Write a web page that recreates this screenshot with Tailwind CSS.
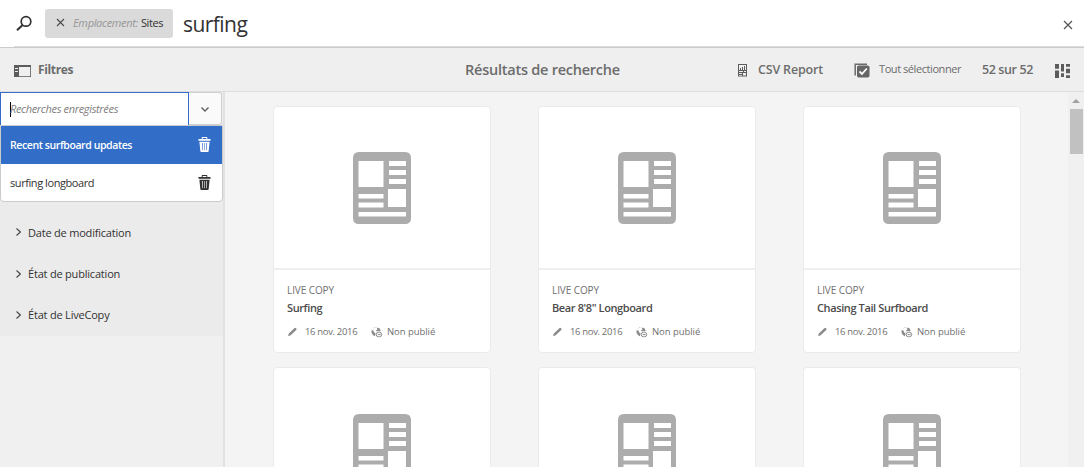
<!DOCTYPE html>
<html lang="fr">
<head>
<meta charset="utf-8">
<title>Résultats de recherche</title>
<script src="https://cdn.jsdelivr.net/npm/@tailwindcss/browser@4"></script>
</head>
<body class="w-[1084px] h-[467px] overflow-hidden flex flex-col bg-[#f4f4f4] font-['Open_Sans','Noto_Sans',sans-serif] text-[#6c6c6c] whitespace-nowrap">

<svg class="hidden">
  <symbol id="page" viewBox="0 0 60 74">
    <path fill="#acacac" fill-rule="evenodd" d="M7 1H53Q59 1 59 7V67Q59 73 53 73H7Q1 73 1 67V7Q1 1 7 1ZM6.500 10V36H31.500V10ZM37 10V15H54V10ZM37 19V24H54V19ZM37 28V33H54V28ZM36 38V56H54V38ZM6.500 43V47.500H31.500V43ZM6.500 51.500V56.500H31.500V51.500ZM6.500 61V65.500H54V61Z"/>
  </symbol>
  <symbol id="trash" viewBox="0 0 14 17">
    <path fill="currentColor" fill-rule="evenodd" d="M4 2V.500Q4 0 4.500 0H9.500Q10 0 10 .500V2H13.500V4H.500V2ZM5 1V2H9V1ZM1.500 5H12.500L11.500 15Q11.400 16 10.500 16H3.500Q2.600 16 2.500 15ZM4.200 6.500L4.700 14H5.300L5 6.500ZM6.700 6.500V14H7.300V6.500ZM9 6.500L8.700 14H9.300L9.800 6.500Z"/>
  </symbol>
  <symbol id="pencil" viewBox="0 0 11 11">
    <path fill="#8a8a8a" d="M7.300 1.200L8.500 .700 9.700 2 9.200 3.100 3.700 8.300 1 9.300 1.900 6.500Z"/>
  </symbol>
  <symbol id="globe" viewBox="0 0 12 11">
    <path fill="#8a8a8a" d="M4.500 .400Q2 .700 .700 3L2.500 3.500 3 5.500 4.500 6 4 9 3.500 9.300Q0 7 .500 4 1.500 .300 5 .200ZM5.500 .500L8.500 1.200 9.700 3.800 8.500 4.500 7 3.800 6 4.800 5 3.500 6.500 2.200Z"/>
    <rect x="5.200" y="5.400" width="5.500" height="4.300" rx="2.100" fill="none" stroke="#8a8a8a"/>
    <path stroke="#8a8a8a" d="M6.700 7.600H9.500"/>
  </symbol>
</svg>

<header class="h-[48px] shrink-0 bg-white flex flex-col">
  <div class="h-[46px] flex items-center pl-[16px] pr-[11px]">
    <svg class="size-[17px]" viewBox="0 0 17 17" fill="none" stroke="#323232" stroke-width="1.700"><circle cx="10" cy="6.400" r="4.800"/><path d="M6.700 9.900L1 15.300" stroke-width="2"/></svg>
    <div class="ml-[12px] w-[128px] h-[29px] rounded-[3px] bg-[#dadada] flex items-center pl-[11px] text-[11px]">
      <svg class="size-[9px] -mt-px" viewBox="0 0 9 9" stroke="#4b4b4b" stroke-width="1.100"><path d="M1 1L8 8M8 1L1 8"/></svg>
      <i class="ml-[8px] w-[68px] text-[#969696] tracking-[-0.320px]">Emplacement:</i>
      <span class="text-[#323232] tracking-[-0.440px]">Sites</span>
    </div>
    <span class="ml-[10px] text-[21px] leading-[28px] tracking-[-0.550px] text-[#323232] mt-[2px]">surfing</span>
    <svg class="ml-auto size-[10px] mt-[4px]" viewBox="0 0 10 10" stroke="#555" stroke-width="1.200"><path d="M1 1L9 9M9 1L1 9"/></svg>
  </div>
  <div class="ml-[14px] h-px bg-[#dcdcdc]"></div>
  <div class="h-px bg-[#cbcbcb]"></div>
</header>

<div class="h-[44px] shrink-0 bg-[#efefef] border-b border-[#dddddd] flex items-center pl-[14px] font-semibold">
  <svg class="w-[17px] h-[12px] mt-[2px]" viewBox="0 0 17 12"><path fill="#5c5c5c" fill-rule="evenodd" d="M0 0H17V12H0ZM5 2V11.300H16.200V2ZM1 3V4H4V3ZM1 6V7H4V6Z"/></svg>
  <span class="ml-[7px] w-[427px] text-[12px] font-bold tracking-[-0.370px]">Filtres</span>
  <span class="w-[272px] text-[14.500px] tracking-[-0.240px]">Résultats de recherche</span>
  <svg class="w-[11px] h-[13px] mt-[2px]" viewBox="0 0 11 13"><path fill="#5c5c5c" fill-rule="evenodd" d="M1 0H10V12.500H1ZM2 1V6H3V4H4V6H5V3H6V6H7V2H8V6H9V1ZM2 7V8H6V7ZM7 7V8H9V7ZM2 9V10H5V9ZM6 9V11.500H9V9ZM2 11V11.700H5V11Z"/></svg>
  <span class="ml-[10px] mt-[2px] w-[96px] text-[12.500px] tracking-[-0.180px]">CSV Report</span>
  <svg class="w-[16px] h-[15px] mt-px" viewBox="0 0 16 15"><path d="M1.200 12.500V1.200H13" fill="none" stroke="#6c6c6c" stroke-width="1.500"/><rect x="3" y="2.500" width="12.500" height="12" rx="1.800" fill="#666"/><path d="M5.500 8.500L8 11L12.800 5.500" fill="none" stroke="#fff" stroke-width="1.800"/></svg>
  <span class="ml-[9px] w-[103px] text-[11px] font-normal tracking-[-0.430px]">Tout sélectionner</span>
  <span class="w-[73px] mt-[2px] text-[12.500px] tracking-[-0.390px]">52 sur 52</span>
  <svg class="w-[15px] h-[14px] mt-[2px]" viewBox="0 0 15 15" preserveAspectRatio="none" fill="#5c5c5c"><path d="M0 0H4V5H0ZM0 7H4V15H0ZM6 0H9V8H6ZM6 10H9V14H6ZM11 0H15V3H11ZM11 5H15V10H11ZM11 12H15V15H11Z"/></svg>
</div>

<div class="flex flex-1 min-h-0">
  <aside class="w-[225px] shrink-0 border-r-2 border-[#e2e2e2] bg-[#f0f0f0] text-[11px] text-[#323232]">
    <div class="h-[244px] bg-[#ebebeb]">
      <div class="flex h-[33px]">
        <div class="w-[189px] bg-white border border-b-0 border-[#326ec8] flex items-center pl-[9px]">
          <span class="w-px h-[15px] bg-black"></span>
          <i class="-ml-px text-[#808080] tracking-[-0.340px]">Recherches enregistrées</i>
        </div>
        <div class="w-[33px] bg-[#fafafa] border border-l-0 border-[#d0d0d0] rounded-r-[3px] flex items-center justify-center">
          <svg class="w-[8px] h-[5px] mt-px" viewBox="0 0 8 5" fill="none" stroke="#606060" stroke-width="1.400"><path d="M.500 .500L4 4L7.500 .500"/></svg>
        </div>
      </div>
      <div class="w-[223px] h-[77px] bg-white border border-[#cbcbcb] rounded-b-[4px]">
        <div class="h-[38px] bg-[#326ec8] text-white flex items-center justify-between pl-[9px] pr-[11px]">
          <span class="mt-[2px] text-[10.500px] font-semibold tracking-[-0.400px]">Recent surfboard updates</span>
          <svg class="w-[13px] h-[16px] -mt-px" viewBox="0 0 14 17" preserveAspectRatio="none"><use href="#trash" width="14" height="17"/></svg>
        </div>
        <div class="h-[37px] flex items-center justify-between pl-[9px] pr-[11px]">
          <span class="mt-[2px] tracking-[-0.430px]">surfing longboard</span>
          <svg class="w-[13px] h-[16px]" viewBox="0 0 14 17" preserveAspectRatio="none"><use href="#trash" width="14" height="17"/></svg>
        </div>
      </div>
      <div class="pt-[11px] pl-[16px] font-medium tracking-[-0.200px]">
        <div class="h-[41px] flex items-center gap-[7px]"><svg class="w-[5px] h-[8px] -mt-[3px]" viewBox="0 0 5 8" fill="none" stroke="#444" stroke-width="1.100"><path d="M.500 .500L4.400 4L.500 7.500"/></svg>Date de modification</div>
        <div class="h-[41px] flex items-center gap-[7px]"><svg class="w-[5px] h-[8px] -mt-[2px]" viewBox="0 0 5 8" fill="none" stroke="#444" stroke-width="1.100"><path d="M.500 .500L4.400 4L.500 7.500"/></svg>État de publication</div>
        <div class="h-[41px] flex items-center gap-[7px]"><svg class="w-[5px] h-[8px] -mt-[2px]" viewBox="0 0 5 8" fill="none" stroke="#444" stroke-width="1.100"><path d="M.500 .500L4.400 4L.500 7.500"/></svg>État de LiveCopy</div>
      </div>
    </div>
  </aside>

  <main id="cards" class="w-[843px] pl-[48px] pt-[14px] grid grid-cols-[218px_218px_218px] grid-rows-[247px_100px] gap-x-[47px] gap-y-[14px] overflow-hidden"></main>

  <div class="w-[16px] bg-[#f0f0f0] flex flex-col items-center">
    <svg class="w-[8px] h-[4px] mt-[7px]" viewBox="0 0 8 4" fill="#a0a0a0"><path d="M4 0L8 4H0Z"/></svg>
    <div class="mt-[6px] ml-[1px] w-[13px] h-[45px] bg-[#c1c1c1]"></div>
  </div>
</div>

<template id="card">
  <article class="bg-white border border-[#ebebeb] rounded-[4px] text-[#707070]">
    <div class="h-[163px] border-b-2 border-[#efefef] flex items-center justify-center pt-[1px]">
      <svg class="w-[60px] h-[74px]"><use href="#page"/></svg>
    </div>
    <div class="pl-[13px] pt-[12px]">
      <div class="text-[10px] leading-[16px] tracking-[-0.090px]">LIVE COPY</div>
      <h2 class="mt-px text-[11px] leading-[18px] font-semibold text-[#4b4b4b] tracking-[-0.390px]"></h2>
      <div class="mt-[7px] flex items-center leading-[16px] text-[9.500px] font-medium">
        <svg class="size-[11px]"><use href="#pencil"/></svg>
        <span class="ml-[7px] w-[66px] tracking-[-0.340px]">16 nov. 2016</span>
        <svg class="w-[12px] h-[11px]"><use href="#globe"/></svg>
        <span class="ml-[4px] tracking-[-0.050px]">Non publié</span>
      </div>
    </div>
  </article>
</template>
<template id="card-top">
  <article class="bg-white border border-b-0 border-[#ebebeb] rounded-t-[4px] overflow-hidden flex justify-center pt-[45px]">
    <svg class="w-[60px] h-[74px] shrink-0"><use href="#page"/></svg>
  </article>
</template>
<script>
  const cards = document.getElementById("cards");
  for (const title of ["Surfing", "Bear 8'8\" Longboard", "Chasing Tail Surfboard"]) {
    const card = document.getElementById("card").content.cloneNode(true);
    card.querySelector("h2").textContent = title;
    cards.append(card);
  }
  for (let i = 0; i < 3; i++) {
    cards.append(document.getElementById("card-top").content.cloneNode(true));
  }
</script>
</body>
</html>
